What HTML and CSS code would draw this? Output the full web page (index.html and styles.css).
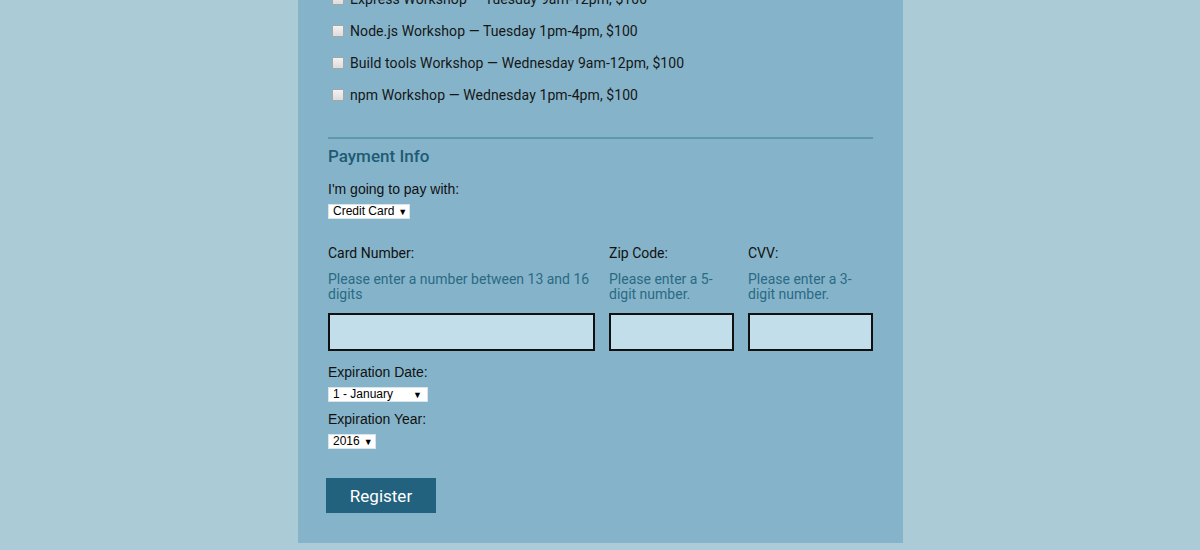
FILE: index.html
```html
<!DOCTYPE html>
<html>
<head>
<meta charset="utf-8">
<link rel="stylesheet" href="styles.css">
</head>
<body>
<div class="container">
  <div class="activities">
    <label class="activity"><input type="checkbox" class="check"> Express Workshop — Tuesday 9am-12pm, $100</label>
    <label class="activity"><input type="checkbox" class="check"> Node.js Workshop — Tuesday 1pm-4pm, $100</label>
    <label class="activity"><input type="checkbox" class="check"> Build tools Workshop — Wednesday 9am-12pm, $100</label>
    <label class="activity"><input type="checkbox" class="check"> npm Workshop — Wednesday 1pm-4pm, $100</label>
  </div>
  <hr class="divider">
  <h2 class="legend">Payment Info</h2>
  <div class="field">
    <div class="label arial">I'm going to pay with:</div>
    <span class="sel sel-pay"><span class="sel-text">Credit Card</span><span class="arrow">▼</span></span>
  </div>
  <div class="card-row">
    <div class="col">
      <div class="label">Card Number:</div>
      <div class="hint">Please enter a number between 13 and 16 digits</div>
      <input type="text" class="text-input">
    </div>
    <div class="col">
      <div class="label">Zip Code:</div>
      <div class="hint">Please enter a 5-digit number.</div>
      <input type="text" class="text-input">
    </div>
    <div class="col">
      <div class="label">CVV:</div>
      <div class="hint">Please enter a 3-digit number.</div>
      <input type="text" class="text-input">
    </div>
  </div>
  <div class="field exp">
    <div class="label arial">Expiration Date:</div>
    <span class="sel sel-month"><span class="sel-text">1 - January</span><span class="arrow">▼</span></span>
  </div>
  <div class="field exp2">
    <div class="label arial">Expiration Year:</div>
    <span class="sel sel-year"><span class="sel-text">2016</span><span class="arrow">▼</span></span>
  </div>
  <button class="register">Register</button>
</div>
</body>
</html>
```

FILE: styles.css
```css
html, body {
  margin: 0;
  padding: 0;
  overflow: hidden;
}
body {
  background: #abcbd7;
  height: 550px;
  font-family: Roboto, "Liberation Sans", Arial, sans-serif;
  color: #1a1a1a;
}
.container {
  width: 545px;
  padding: 0 30px 30px 30px;
  background: #85b4ca;
  margin: 0 0 0 298px;
}
.activities {
  margin-top: -17px;
  display: flex;
  flex-direction: column;
}
.activity {
  height: 32px;
  display: flex;
  align-items: center;
  font-size: 14px;
  letter-spacing: 0.08px;
  color: #161616;
}
.check {
  appearance: none;
  -webkit-appearance: none;
  width: 12px;
  height: 12px;
  margin: 0 6px 0 4px;
  border: 1px solid #a6a6a6;
  border-radius: 1px;
  background: linear-gradient(#f2f2f2, #dcdcdc);
  flex: none;
}
.divider {
  border: none;
  height: 2px;
  background: #5f98ae;
  margin: 26px 0 0 0;
}
.legend {
  margin: 7px 0 0 0;
  font-size: 17px;
  line-height: 20px;
  font-weight: 500;
  color: #1f5b74;
}
.field {
  margin-top: 15px;
}
.label {
  font-size: 14px;
  line-height: 17px;
  color: #111;
}
.arial {
  font-family: "Liberation Sans", Arial, sans-serif;
  font-size: 14px;
}
.sel {
  display: flex;
  align-items: center;
  justify-content: space-between;
  background: #fff;
  height: 15px;
  margin-top: 6px;
  padding: 0 5px 0 4px;
  box-sizing: border-box;
  font-family: "Liberation Sans", Arial, sans-serif;
  font-size: 12px;
  color: #000;
  border: 1px solid #d8e6ec;
}
.sel-text {
  line-height: 13px;
  white-space: nowrap;
}
.arrow {
  font-size: 9px;
  margin-left: 4px;
}
.sel-pay { width: 82px; }
.sel-month { width: 100px; }
.sel-year { width: 48px; padding-right: 4px; }
.card-row {
  display: grid;
  grid-template-columns: 267px 125px 125px;
  column-gap: 14px;
  margin-top: 26px;
}
.col {
  display: flex;
  flex-direction: column;
}
.hint {
  margin-top: 10px;
  font-size: 14px;
  line-height: 15px;
  color: #2b6a84;
  height: 30px;
}
.text-input {
  margin-top: 11px;
  height: 38px;
  box-sizing: border-box;
  width: 100%;
  background: #c1deea;
  border: 2px solid #111;
  padding: 0;
}
.exp {
  margin-top: 13px;
}
.exp2 {
  margin-top: 9px;
}
.register {
  margin-top: 29px;
  margin-left: -2px;
  width: 110px;
  height: 35px;
  background: #22627e;
  color: #fff;
  border: none;
  font-family: Roboto, "Liberation Sans", sans-serif;
  font-size: 17px;
  display: block;
}
```
